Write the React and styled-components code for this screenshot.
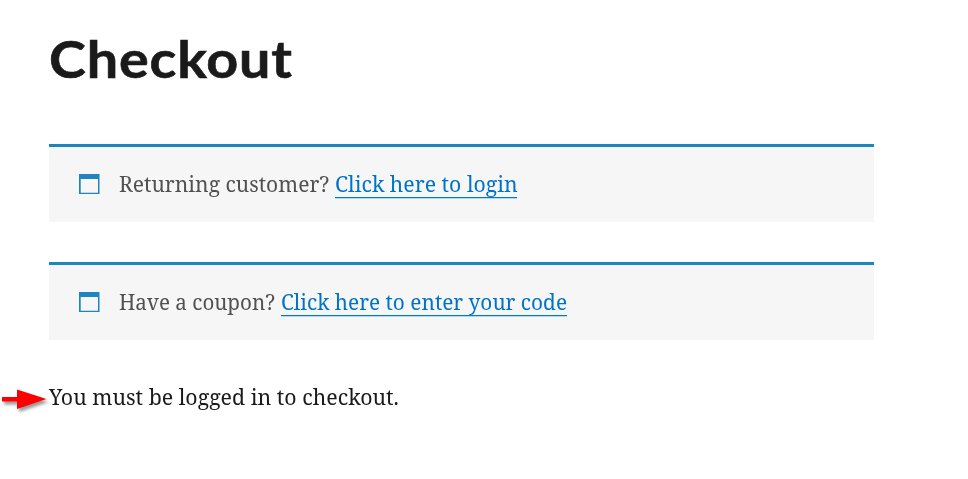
import React from "react";
import styled, { createGlobalStyle } from "styled-components";

const GlobalStyle = createGlobalStyle`
  * { box-sizing: border-box; }
  body { margin: 0; background: #fff; color: #1a1a1a; }
`;

const Page = styled.main`
  width: 968px;
  height: 479px;
  overflow: hidden;
  padding: 30px 94px 0 49px;
  font: 22px/32px "Noto Serif", "Liberation Serif", serif;
`;

const Title = styled.h1`
  height: 58px;
  margin: 0 0 56px;
  font: 700 52px/57px Lato, sans-serif;
  white-space: nowrap;
`;

const TitleText = styled.span`
  display: inline-block;
  letter-spacing: 0.8px;
  -webkit-text-stroke: 0.6px;
  transform: scaleX(1.07);
  transform-origin: left;
`;

const Notice = styled.section`
  display: flex;
  align-items: center;
  height: 78px;
  margin-bottom: 40px;
  padding: 0 30px 2px;
  border-top: 3px solid #1e85be;
  background: #f6f6f6;
  color: #515151;
`;

const WindowIcon = styled.svg`
  flex: none;
  width: 21px;
  height: 20px;
  margin-right: 19px;
`;

const Line = styled.span`
  flex: none;
  width: ${(p) => p.$width}px;
  height: 32px;
  margin-right: 6px;
  line-height: ${(p) => p.$leading || 32}px;
  white-space: nowrap;
`;

const Link = styled.a`
  flex: none;
  width: ${(p) => p.$width}px;
  height: 28px;
  border-bottom: 1px solid #007acc;
  box-shadow: 0 1px #b5d7ed;
  color: #0073c8;
  line-height: 26px;
  white-space: nowrap;
  text-decoration: none;
`;

const Condensed = styled.span`
  display: inline-block;
  transform: scaleX(${(p) => p.$scale});
  transform-origin: left;
`;

const Message = styled.p`
  display: flex;
  margin: 0 0 0 -49px;
`;

const Arrow = styled.svg`
  flex: none;
  width: 49px;
  height: 32px;
  filter: drop-shadow(2px 3px 1.5px rgba(0, 0, 0, 0.4));
`;

function Info({ text, textWidth, textScale, link, linkWidth, linkScale }) {
  return (
    <Notice>
      <WindowIcon viewBox="0 0 21 20">
        <path d="M0 0h20.5v20H0zM1.7 5v13.8h17.3V5z" fill="#1e85be" fillRule="evenodd" />
      </WindowIcon>
      <Line $width={textWidth} $leading={30}><Condensed $scale={textScale}>{text}</Condensed></Line>
      <Link $width={linkWidth}><Condensed $scale={linkScale}>{link}</Condensed></Link>
    </Notice>
  );
}

export default function App() {
  return (
    <Page>
      <GlobalStyle />
      <Title><TitleText>Checkout</TitleText></Title>
      <Info text="Returning customer?" textWidth={210} textScale={0.957} link="Click here to login" linkWidth={182} linkScale={0.966} />
      <Info text="Have a coupon?" textWidth={156} textScale={0.937} link="Click here to enter your code" linkWidth={286} linkScale={0.947} />
      <Message>
        <Arrow viewBox="0 0 49 32"><path d="M2 17h15V9.5l29.5 9.5L17 29v-7.5H2z" fill="red" /></Arrow>
        <Line $width={350}><Condensed $scale={0.97}>You must be logged in to checkout.</Condensed></Line>
      </Message>
    </Page>
  );
}
